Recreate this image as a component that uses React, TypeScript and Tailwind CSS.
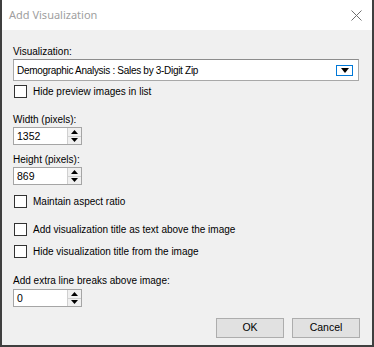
import React from 'react';

const font = { fontFamily: '"Liberation Sans", Arial, sans-serif' };

function CheckRow({ label, className }: { label: string; className?: string }) {
  return (
    <div className={`flex items-center h-[13px] ${className ?? ''}`}>
      <div className="w-[13px] h-[13px] border border-[#333333] bg-white shrink-0" />
      <span className="ml-[6px] text-[10px] leading-[13px] text-black">{label}</span>
    </div>
  );
}

function Spin({ value, className }: { value: string; className?: string }) {
  return (
    <div className={`flex w-[69px] h-[18px] border border-[#a5a5a5] bg-white ${className ?? ''}`}>
      <div className="flex-1 pl-[3px] text-[10.5px] leading-[16px] text-black">{value}</div>
      <div className="flex flex-col w-[14px] border-l border-[#d0d0d0] bg-[#f0f0f0]">
        <div className="flex-1 flex items-center justify-center border-b border-[#d0d0d0]">
          <svg width="7" height="4" viewBox="0 0 7 4"><path d="M3.5 0 L7 4 L0 4 Z" fill="#000" /></svg>
        </div>
        <div className="flex-1 flex items-center justify-center">
          <svg width="7" height="4" viewBox="0 0 7 4"><path d="M0 0 L7 0 L3.5 4 Z" fill="#000" /></svg>
        </div>
      </div>
    </div>
  );
}

export default function App() {
  return (
    <div
      className="w-[374px] h-[347px] flex flex-col bg-[#f0f0f0] border-l-2 border-r-2 border-b-2 border-[#3f3f3f] overflow-hidden"
      style={font}
    >
      {/* title bar */}
      <div className="h-[30px] bg-white flex items-center justify-between pl-[7px] pr-[10px] shrink-0">
        <span className="text-[11px] text-[#a0a0a0]" style={{ fontFamily: '"Noto Sans", "Open Sans", sans-serif' }}>
          Add Visualization
        </span>
        <svg width="11" height="11" viewBox="0 0 11 11">
          <path d="M0.5 0.5 L10.5 10.5 M10.5 0.5 L0.5 10.5" stroke="#6f6f6f" strokeWidth="1" />
        </svg>
      </div>

      <div className="flex flex-col pl-[11px] pr-[11px]">
        <div className="mt-[15px] text-[10px] leading-[13px] text-black">Visualization:</div>

        {/* combo */}
        <div className="mt-[1px] h-[22px] w-[346px] flex items-center border border-[#a8a8a8] border-t-[#8c8c8c] bg-white pl-[3px] pr-[5px]">
          <span className="flex-1 text-[10px] tracking-[-0.3px] text-black">Demographic Analysis : Sales by 3-Digit Zip</span>
          <div className="w-[17px] h-[11px] border border-[#0078d7] flex items-center justify-center bg-white">
            <svg width="8" height="5" viewBox="0 0 8 5"><path d="M0 0 L8 0 L4 5 Z" fill="#000" /></svg>
          </div>
        </div>

        <CheckRow label="Hide preview images in list" className="mt-[4px] pl-[1px]" />

        <div className="mt-[15px] text-[10px] leading-[13px] text-black">Width (pixels):</div>
        <Spin value="1352" className="mt-[1px]" />

        <div className="mt-[8px] text-[10px] leading-[13px] text-black">Height (pixels):</div>
        <Spin value="869" className="mt-[1px]" />

        <CheckRow label="Maintain aspect ratio" className="mt-[10px] pl-[1px]" />
        <CheckRow label="Add visualization title as text above the image" className="mt-[15px] pl-[1px]" />
        <CheckRow label="Hide visualization title from the image" className="mt-[9px] pl-[1px]" />

        <div className="mt-[16px] text-[10px] leading-[13px] text-black">Add extra line breaks above image:</div>
        <Spin value="0" className="mt-[2px]" />

        <div className="mt-[11px] flex justify-end gap-[8px] pr-[1px]">
          <button className="w-[68px] h-[20px] border border-[#adadad] bg-[#e1e1e1] text-[10.5px] text-black">OK</button>
          <button className="w-[68px] h-[20px] border border-[#adadad] bg-[#e1e1e1] text-[10.5px] text-black">Cancel</button>
        </div>
      </div>
    </div>
  );
}
